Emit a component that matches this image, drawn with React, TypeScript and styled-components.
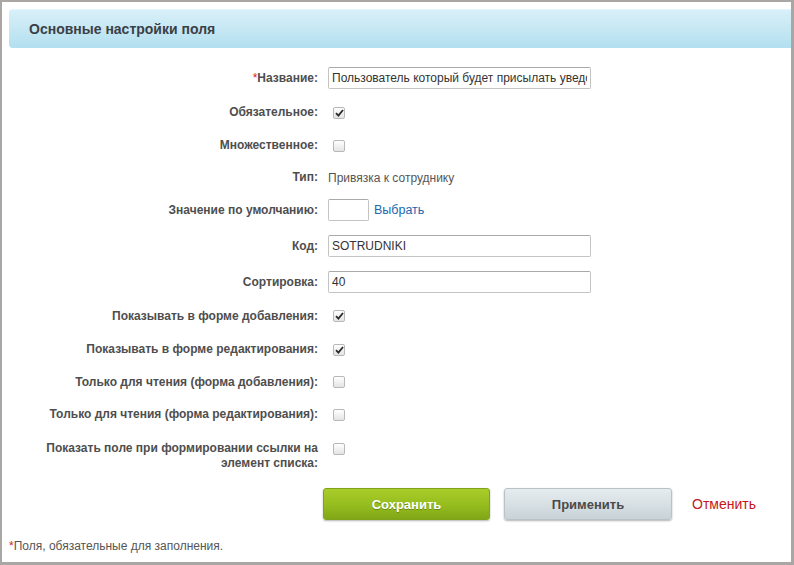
import React from "react";
import styled, { createGlobalStyle } from "styled-components";

const GlobalStyle = createGlobalStyle`
  html, body {
    margin: 0;
    padding: 0;
    background: #fff;
  }
  body {
    font-family: "Liberation Sans", Arial, sans-serif;
    font-size: 12px;
    color: #4c4c4c;
  }
`;

const Frame = styled.div`
  box-sizing: border-box;
  width: 794px;
  height: 565px;
  border: 2px solid #aaa6a4;
  border-right-width: 3px;
  border-bottom-width: 3px;
  padding: 7px 0 0 7px;
  display: flex;
  flex-direction: column;
  overflow: hidden;
`;

const Header = styled.div`
  height: 39px;
  display: flex;
  align-items: center;
  padding-left: 20px;
  border-radius: 4px 0 0 4px;
  background: linear-gradient(to bottom, #d9f0f8 0%, #c3e6f3 60%, #b2dff0 100%);
  box-shadow: inset 0 1px 0 #e6f5fb;
  font-size: 14px;
  font-weight: bold;
  color: #3a4047;
`;

const Form = styled.div`
  margin-top: 12px;
  display: flex;
  flex-direction: column;
`;

// $top: row whose controls hang from the first label line instead of centering
const Row = styled.div<{ $h: number; $top?: boolean }>`
  box-sizing: border-box;
  display: grid;
  grid-template-columns: 309px 1fr;
  column-gap: 10px;
  align-items: ${({ $top }) => ($top ? "start" : "center")};
  padding-top: ${({ $top }) => ($top ? 10 : 0)}px;
  height: ${({ $h }) => $h}px;
`;

const Label = styled.div`
  text-align: right;
  font-weight: bold;
  color: #4e4e4e;
  line-height: 15px;
`;

const Star = styled.span`
  color: #d1232a;
  font-weight: normal;
`;

const Control = styled.div`
  display: flex;
  align-items: center;
  gap: 5px;
  min-height: 15px;
`;

const TextInput = styled.input<{ $w: number }>`
  box-sizing: border-box;
  width: ${({ $w }) => $w}px;
  height: 22px;
  padding: 0 3px;
  border: 1px solid #c4c4c4;
  border-top-color: #a9a9a9;
  border-radius: 2px;
  font-family: "Liberation Sans", Arial, sans-serif;
  font-size: 12px;
  color: #333;
  outline: none;
  background: #fff;
`;

const Value = styled.span`
  color: #555;
`;

const Link = styled.a`
  color: #2067b0;
  text-decoration: none;
  font-size: 12.5px;
`;

const Box = styled.span`
  box-sizing: border-box;
  width: 12px;
  height: 12px;
  margin-left: 5px;
  border: 1px solid #b8b8b8;
  border-radius: 2px;
  background: linear-gradient(to bottom, #ffffff, #e4e4e4);
  display: inline-flex;
  align-items: center;
  justify-content: center;
`;

const Check = ({ on }: { on?: boolean }) => (
  <Box>
    {on && (
      <svg width="9" height="8" viewBox="0 0 9 8">
        <path d="M1 4.2 L3.4 6.6 L8 1" fill="none" stroke="#2b2b2b" strokeWidth="1.8" />
      </svg>
    )}
  </Box>
);

const Buttons = styled.div`
  margin-top: 15px;
  padding-left: 314px;
  display: flex;
  align-items: center;
`;

const Button = styled.button<{ $primary?: boolean }>`
  box-sizing: border-box;
  width: ${({ $primary }) => ($primary ? 167 : 168)}px;
  height: 32px;
  margin-right: 14px;
  border-radius: 3px;
  font-family: "Liberation Sans", Arial, sans-serif;
  font-size: 13px;
  font-weight: bold;
  cursor: pointer;
  ${({ $primary }) =>
    $primary
      ? `
    color: #fff;
    border: 1px solid #7fa41a;
    background: linear-gradient(to bottom, #a9cd2a 0%, #97be1f 50%, #80a717 100%);
    text-shadow: 0 1px 0 #6a8a12;
    box-shadow: 0 1px 2px rgba(0,0,0,0.3);
  `
      : `
    color: #4a4a4a;
    border: 1px solid #b9c2c7;
    background: linear-gradient(to bottom, #e6ecef 0%, #d6dfe3 55%, #c8d2d7 100%);
    box-shadow: 0 1px 2px rgba(0,0,0,0.3);
  `}
`;

const Cancel = styled.a`
  margin-left: 6px;
  color: #c4161c;
  font-size: 14px;
  text-decoration: none;
`;

const Footnote = styled.div`
  margin-top: auto;
  margin-bottom: 9px;
  color: #555;
  font-size: 12px;
`;

type Field = {
  label: React.ReactNode;
  h: number;
  top?: boolean;
  control: React.ReactNode;
};

const fields: Field[] = [
  {
    label: (
      <>
        <Star>*</Star>Название:
      </>
    ),
    h: 36,
    control: <TextInput $w={263} defaultValue="Пользователь который будет присылать уведомления" />,
  },
  { label: "Обязательное:", h: 33, control: <Check on /> },
  { label: "Множественное:", h: 33, control: <Check /> },
  { label: "Тип:", h: 31, control: <Value>Привязка к сотруднику</Value> },
  {
    label: "Значение по умолчанию:",
    h: 34,
    control: (
      <>
        <TextInput $w={41} defaultValue="" />
        <Link href="#">Выбрать</Link>
      </>
    ),
  },
  { label: "Код:", h: 38, control: <TextInput $w={263} defaultValue="SOTRUDNIKI" /> },
  { label: "Сортировка:", h: 34, control: <TextInput $w={263} defaultValue="40" /> },
  { label: "Показывать в форме добавления:", h: 34, control: <Check on /> },
  { label: "Показывать в форме редактирования:", h: 33, control: <Check on /> },
  { label: "Только для чтения (форма добавления):", h: 32, control: <Check /> },
  { label: "Только для чтения (форма редактирования):", h: 33, control: <Check /> },
  {
    label: (
      <>
        Показать поле при формировании ссылки на
        <br />
        элемент списка:
      </>
    ),
    h: 42,
    top: true,
    control: <Check />,
  },
];

export default function App() {
  return (
    <>
      <GlobalStyle />
      <Frame>
        <Header>Основные настройки поля</Header>
        <Form>
          {fields.map((f, i) => (
            <Row key={i} $h={f.h} $top={f.top}>
              <Label>{f.label}</Label>
              <Control>{f.control}</Control>
            </Row>
          ))}
        </Form>
        <Buttons>
          <Button $primary>Сохранить</Button>
          <Button>Применить</Button>
          <Cancel href="#">Отменить</Cancel>
        </Buttons>
        <Footnote>
          <Star>*</Star>Поля, обязательные для заполнения.
        </Footnote>
      </Frame>
    </>
  );
}
